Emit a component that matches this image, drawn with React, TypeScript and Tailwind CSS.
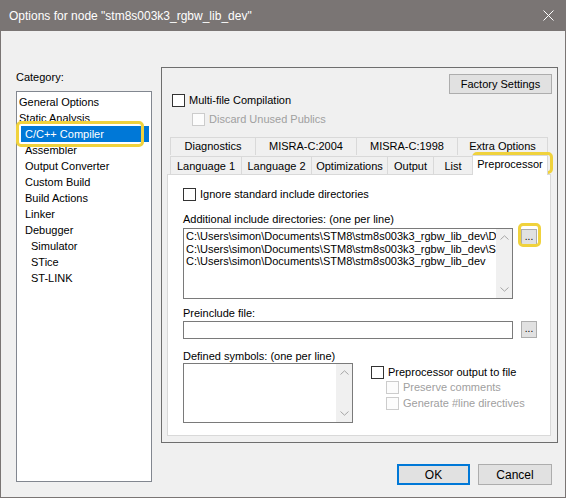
import React from 'react';

type Cat = { label: string; level: 0 | 1 | 2; selected?: boolean };

const categories: Cat[] = [
  { label: 'General Options', level: 0 },
  { label: 'Static Analysis', level: 0 },
  { label: 'C/C++ Compiler', level: 1, selected: true },
  { label: 'Assembler', level: 1 },
  { label: 'Output Converter', level: 1 },
  { label: 'Custom Build', level: 1 },
  { label: 'Build Actions', level: 1 },
  { label: 'Linker', level: 1 },
  { label: 'Debugger', level: 1 },
  { label: 'Simulator', level: 2 },
  { label: 'STice', level: 2 },
  { label: 'ST-LINK', level: 2 },
];

const levelClass = {
  0: 'ml-[0px] pl-[2px]',
  1: 'ml-[4px] pl-[4px]',
  2: 'ml-[10px] pl-[4px]',
};

const tabsTop = [
  { label: 'Diagnostics', w: 'w-[85px]' },
  { label: 'MISRA-C:2004', w: 'w-[101px]' },
  { label: 'MISRA-C:1998', w: 'w-[101px]' },
  { label: 'Extra Options', w: 'w-[91px]' },
];

const tabsBottom = [
  { label: 'Language 1', w: 'w-[71px]' },
  { label: 'Language 2', w: 'w-[70px]' },
  { label: 'Optimizations', w: 'w-[76px]' },
  { label: 'Output', w: 'w-[46px]' },
  { label: 'List', w: 'w-[39px]' },
];

const paths = [
  'C:\\Users\\simon\\Documents\\STM8\\stm8s003k3_rgbw_lib_dev\\Drivers\\inc',
  'C:\\Users\\simon\\Documents\\STM8\\stm8s003k3_rgbw_lib_dev\\Src',
  'C:\\Users\\simon\\Documents\\STM8\\stm8s003k3_rgbw_lib_dev',
];

const Check = ({ disabled = false }: { disabled?: boolean }) => (
  <span
    className={
      disabled
        ? 'w-[13px] h-[13px] shrink-0 border border-[#cccccc] bg-[#fcfcfc]'
        : 'w-[13px] h-[13px] shrink-0 border border-[#333333] bg-white'
    }
  />
);

const VScroll = () => (
  <div className="w-[16px] h-full shrink-0 bg-[#f0f0f0] flex flex-col justify-between">
    <div className="h-[17px] flex items-center justify-center">
      <svg width="9" height="5" viewBox="0 0 9 5">
        <path d="M0.5 4.5 L4.5 0.8 L8.5 4.5" stroke="#a6a6a6" strokeWidth="1" fill="none" />
      </svg>
    </div>
    <div className="h-[17px] flex items-center justify-center">
      <svg width="9" height="5" viewBox="0 0 9 5">
        <path d="M0.5 0.5 L4.5 4.2 L8.5 0.5" stroke="#a6a6a6" strokeWidth="1" fill="none" />
      </svg>
    </div>
  </div>
);

const Browse = () => (
  <button className="w-[16px] h-[17px] border border-[#adadad] bg-[#e1e1e1] text-[10px] leading-[12px] flex items-end justify-center pb-[2px]">
    ...
  </button>
);

export default function App() {
  return (
    <div className="relative w-[566px] h-[498px] flex flex-col bg-[#f0f0f0] font-['Liberation_Sans',Arial,sans-serif] text-[11px] text-black overflow-hidden">
      {/* Title bar */}
      <div className="h-[31px] shrink-0 bg-[#7a7574] flex items-center justify-between pl-[9px] pr-[12px] text-white text-[12px]">
        <span>Options for node "stm8s003k3_rgbw_lib_dev"</span>
        <svg width="11" height="11" viewBox="0 0 11 11">
          <path d="M0.5 0.5 L10.5 10.5 M10.5 0.5 L0.5 10.5" stroke="white" strokeWidth="1" />
        </svg>
      </div>

      <div className="flex-1 border-x border-b border-[#7a7574] pt-[36px] pl-[15px] flex items-start">
        {/* Category column */}
        <div className="mt-[2px] flex flex-col">
          <div className="leading-[16px]">Category:</div>
          <div className="mt-[6px] w-[136px] h-[391px] border border-[#828790] bg-white pt-[2px] flex flex-col">
            {categories.map((c) => (
              <div
                key={c.label}
                className={`${levelClass[c.level]} h-[16px] leading-[16px] whitespace-nowrap ${
                  c.selected ? 'bg-[#0078d7] text-white mr-[2px]' : ''
                }`}
              >
                {c.label}
              </div>
            ))}
          </div>
        </div>

        {/* Right column */}
        <div className="ml-[9px] flex flex-col">
          <div className="w-[397px] h-[376px] border border-[#6e6e6e] flex flex-col">
            <div className="flex justify-end pt-[6px] pr-[5px]">
              <button className="w-[103px] h-[20px] border border-[#adadad] bg-[#e1e1e1] leading-[18px]">
                Factory Settings
              </button>
            </div>
            <div className="h-[13px] flex items-center pl-[10px]">
              <Check />
              <span className="ml-[4px]">Multi-file Compilation</span>
            </div>
            <div className="mt-[6px] h-[13px] flex items-center pl-[30px] text-[#a0a0a0]">
              <Check disabled />
              <span className="ml-[4px]">Discard Unused Publics</span>
            </div>

            {/* Tabs */}
            <div className="mt-[11px] pl-[8px] flex flex-col">
              <div className="flex">
                {tabsTop.map((t, i) => (
                  <div
                    key={t.label}
                    className={`${t.w} h-[18px] border-t border-l border-[#d9d9d9] bg-[#f0f0f0] text-center leading-[17px] ${
                      i === tabsTop.length - 1 ? 'border-r' : ''
                    }`}
                  >
                    {t.label}
                  </div>
                ))}
              </div>
              <div className="flex items-end">
                {tabsBottom.map((t) => (
                  <div
                    key={t.label}
                    className={`${t.w} h-[18px] border-t border-l border-[#d9d9d9] bg-[#f0f0f0] text-center leading-[18px]`}
                  >
                    {t.label}
                  </div>
                ))}
                <div className="relative z-10 w-[76px] h-[20px] -mb-[1px] border-t border-x border-[#d9d9d9] bg-white text-center leading-[16px]">
                  Preprocessor
                </div>
              </div>
            </div>

            {/* Tab page */}
            <div className="ml-[5px] w-[384px] h-[262px] border border-[#d9d9d9] bg-white pl-[15px] pt-[13px] flex flex-col">
              <div className="h-[13px] flex items-center">
                <Check />
                <span className="ml-[4px]">Ignore standard include directories</span>
              </div>
              <div className="mt-[11px] leading-[14px]">Additional include directories: (one per line)</div>
              <div className="mt-[2px] flex items-start">
                <div className="w-[330px] h-[71px] border border-[#7a7a7a] bg-white flex">
                  <div className="flex-1 overflow-hidden pl-[2px] pt-[1px] leading-[12.5px] whitespace-nowrap">
                    {paths.map((p) => (
                      <div key={p}>{p}</div>
                    ))}
                  </div>
                  <VScroll />
                </div>
                <div className="ml-[8px] mt-[1px]">
                  <Browse />
                </div>
              </div>

              <div className="mt-[7px] leading-[14px]">Preinclude file:</div>
              <div className="mt-[1px] flex items-start">
                <div className="w-[330px] h-[18px] border border-[#7a7a7a] bg-white" />
                <div className="ml-[8px]">
                  <Browse />
                </div>
              </div>

              <div className="mt-[10px] flex items-start">
                <div className="flex flex-col">
                  <div className="leading-[14px]">Defined symbols: (one per line)</div>
                  <div className="w-[170px] h-[60px] border border-[#7a7a7a] bg-white flex justify-end">
                    <VScroll />
                  </div>
                </div>
                <div className="ml-[18px] pt-[17px] flex flex-col">
                  <div className="h-[13px] flex items-center">
                    <Check />
                    <span className="ml-[4px]">Preprocessor output to file</span>
                  </div>
                  <div className="mt-[2px] ml-[15px] h-[13px] flex items-center text-[#a0a0a0]">
                    <Check disabled />
                    <span className="ml-[4px]">Preserve comments</span>
                  </div>
                  <div className="mt-[3px] ml-[15px] h-[13px] flex items-center text-[#a0a0a0]">
                    <Check disabled />
                    <span className="ml-[4px]">Generate #line directives</span>
                  </div>
                </div>
              </div>
            </div>
          </div>

          <div className="mt-[21px] pr-[6px] flex justify-end gap-[8px]">
            <button className="w-[73px] h-[21px] border-2 border-[#0078d7] bg-[#e1e1e1] text-[12px]">OK</button>
            <button className="w-[74px] h-[21px] border border-[#adadad] bg-[#e1e1e1] text-[12px]">Cancel</button>
          </div>
        </div>
      </div>

      {/* Yellow highlight annotations */}
      <div className="absolute left-[16px] top-[121px] w-[128px] h-[26px] border-[3px] border-[#f0d23c] rounded-[5px] pointer-events-none" />
      <div className="absolute left-[472px] top-[152px] w-[81px] h-[22px] border-[3px] border-[#f0d23c] rounded-[5px] pointer-events-none" />
      <div className="absolute left-[518px] top-[223px] w-[23px] h-[24px] border-[3px] border-[#f0d23c] rounded-[5px] pointer-events-none" />
    </div>
  );
}
